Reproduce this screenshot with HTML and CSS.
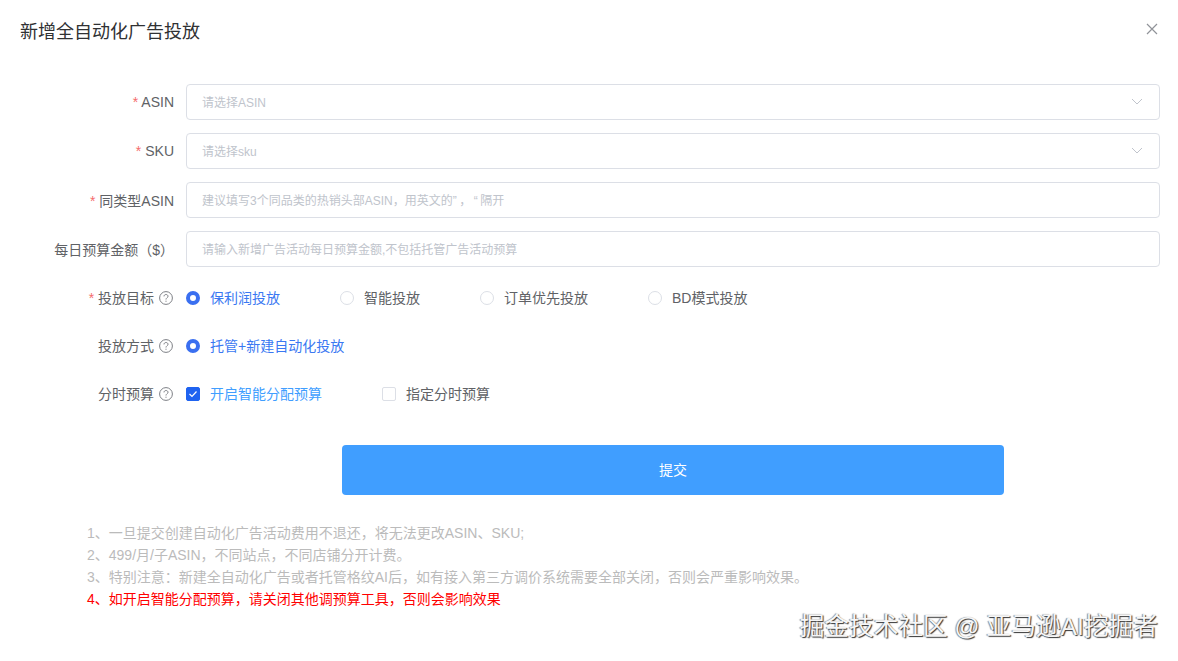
FILE: index.html
```html
<!DOCTYPE html>
<html lang="zh-CN">
<head>
  <meta charset="UTF-8" />
  <meta name="viewport" content="width=device-width, initial-scale=1.0"/>
  <title>新增全自动化广告投放</title>
  <link rel="stylesheet" href="styles.css">
</head>
<body>

  <div class="dialog">
    <div class="dialog-header">
      <span class="dialog-title">新增全自动化广告投放</span>
      <svg class="close-icon" width="12" height="12" viewBox="0 0 12 12"><path d="M1 1L11 11M11 1L1 11"/></svg>
    </div>

    <form class="form">
      <div class="form-row">
        <label class="form-label"><i class="req">*</i> ASIN</label>
        <div class="select">
          <span>请选择ASIN</span>
          <svg class="arrow" width="12" height="7" viewBox="0 0 12 7"><path d="M1 1L6 6L11 1"/></svg>
        </div>
      </div>
      <div class="form-row">
        <label class="form-label"><i class="req">*</i> SKU</label>
        <div class="select">
          <span>请选择sku</span>
          <svg class="arrow" width="12" height="7" viewBox="0 0 12 7"><path d="M1 1L6 6L11 1"/></svg>
        </div>
      </div>
      <div class="form-row">
        <label class="form-label"><i class="req">*</i> 同类型ASIN</label>
        <div class="select"><span>建议填写3个同品类的热销头部ASIN，用英文的<span class="quote">”，“</span>隔开</span></div>
      </div>
      <div class="form-row">
        <label class="form-label">每日预算金额（$）</label>
        <div class="select"><span>请输入新增广告活动每日预算金额,不包括托管广告活动预算</span></div>
      </div>

      <div class="form-row">
        <label class="form-label with-help"><i class="req">*</i> 投放目标<svg class="help" width="14" height="14" viewBox="0 0 14 14"><circle cx="7" cy="7" r="6.4"/><path d="M5 5.4C5 4.2 5.9 3.5 7 3.5C8.1 3.5 9 4.2 9 5.3C9 6.7 7 6.8 7 8.5"/><path d="M7 9.7V10.8"/></svg></label>
        <div class="options">
          <div class="option active"><span class="radio"></span><span class="option-text">保利润投放</span></div>
          <div class="option"><span class="radio"></span><span class="option-text">智能投放</span></div>
          <div class="option"><span class="radio"></span><span class="option-text">订单优先投放</span></div>
          <div class="option"><span class="radio"></span><span class="option-text">BD模式投放</span></div>
        </div>
      </div>
      <div class="form-row row-tight">
        <label class="form-label with-help">投放方式<svg class="help" width="14" height="14" viewBox="0 0 14 14"><circle cx="7" cy="7" r="6.4"/><path d="M5 5.4C5 4.2 5.9 3.5 7 3.5C8.1 3.5 9 4.2 9 5.3C9 6.7 7 6.8 7 8.5"/><path d="M7 9.7V10.8"/></svg></label>
        <div class="options">
          <div class="option active"><span class="radio"></span><span class="option-text">托管+新建自动化投放</span></div>
        </div>
      </div>
      <div class="form-row row-tight">
        <label class="form-label with-help">分时预算<svg class="help" width="14" height="14" viewBox="0 0 14 14"><circle cx="7" cy="7" r="6.4"/><path d="M5 5.4C5 4.2 5.9 3.5 7 3.5C8.1 3.5 9 4.2 9 5.3C9 6.7 7 6.8 7 8.5"/><path d="M7 9.7V10.8"/></svg></label>
        <div class="options">
          <div class="option checked">
            <span class="checkbox"><svg width="10" height="8" viewBox="0 0 10 8"><path d="M1.5 4L4 6.5L8.5 1.5"/></svg></span><span class="option-text">开启智能分配预算</span>
          </div>
          <div class="option"><span class="checkbox"></span><span class="option-text">指定分时预算</span></div>
        </div>
      </div>

      <div class="submit-row">
        <button type="button" class="submit">提交</button>
      </div>
    </form>

    <div class="notes">
      <p>1、一旦提交创建自动化广告活动费用不退还，将无法更改ASIN、SKU;</p>
      <p>2、499/月/子ASIN，不同站点，不同店铺分开计费。</p>
      <p>3、特别注意：新建全自动化广告或者托管格纹AI后，如有接入第三方调价系统需要全部关闭，否则会严重影响效果。</p>
      <p class="warn">4、如开启智能分配预算，请关闭其他调预算工具，否则会影响效果</p>
    </div>
  </div>

  <div class="watermark">掘金技术社区 @ 亚马逊AI挖掘者</div>

</body>
</html>
```

FILE: styles.css
```css
* {
  box-sizing: border-box;
}

html, body {
  height: 100%;
}

body {
  margin: 0;
  background: #fff;
  font-family: "Liberation Sans", "Noto Sans CJK SC", sans-serif;
  font-size: 14px;
  color: #606266;
  overflow: hidden;
}

.dialog {
  height: 100%;
}

.dialog-header {
  display: flex;
  align-items: center;
  justify-content: space-between;
  height: 60px;
  padding: 0 20px;
}

.dialog-title {
  font-size: 18px;
  color: #303133;
}

.close-icon {
  margin-top: -2px;
}

.close-icon path {
  fill: none;
  stroke: #909399;
  stroke-width: 1.2;
}

.form {
  padding: 24px 18px 0 0;
}

.form-row {
  display: flex;
  align-items: center;
  gap: 12px;
  height: 36px;
  margin-bottom: 13px;
}

.form-row.row-tight {
  margin-top: -1px;
}

.form-label {
  flex: none;
  width: 174px;
  padding-bottom: 1px;
  text-align: right;
  white-space: nowrap;
}

.form-label.with-help {
  padding-bottom: 2px;
}

.row-tight .form-label.with-help {
  padding-bottom: 3px;
}

.req {
  color: #f56c6c;
  font-style: normal;
}

.help {
  margin: 0 1px 0 5px;
  vertical-align: -2px;
}

.help circle,
.help path {
  fill: none;
  stroke: #7d7f85;
  stroke-width: 1;
}

.select {
  display: flex;
  align-items: center;
  justify-content: space-between;
  flex: 1;
  height: 36px;
  padding: 0 16px 2px 15px;
  border: 1px solid #dcdfe6;
  border-radius: 4px;
  font-size: 12px;
  color: #c0c4cc;
}

.quote {
  letter-spacing: 2.5px;
}

.arrow path {
  fill: none;
  stroke: #c0c4cc;
  stroke-width: 1;
}

.options {
  display: flex;
  gap: 60px;
}

.option {
  display: flex;
  align-items: center;
  gap: 10px;
}

.option-text {
  margin-bottom: 2px;
}

.option.active {
  color: #3a78f2;
}

.option.checked {
  color: #409eff;
}

.radio {
  width: 14px;
  height: 14px;
  border: 1px solid #dcdfe6;
  border-radius: 50%;
  background: #fff;
}

.active .radio {
  border: 4px solid #3a6ff0;
}

.checkbox {
  display: flex;
  align-items: center;
  justify-content: center;
  width: 14px;
  height: 14px;
  border: 1px solid #dcdfe6;
  border-radius: 2px;
}

.checked .checkbox {
  border-color: #1f63f0;
  background: #1f63f0;
}

.checkbox path {
  fill: none;
  stroke: #fff;
  stroke-width: 1.2;
}

.submit-row {
  padding: 20px 156px 0 342px;
}

.submit {
  display: block;
  width: 100%;
  height: 50px;
  padding-bottom: 3px;
  border: none;
  border-radius: 4px;
  background: #409eff;
  color: #fff;
  font: inherit;
}

.notes {
  padding: 27px 0 0 87px;
  color: #bbb;
  line-height: 22px;
}

.notes p {
  margin: 0;
}

.notes .warn {
  color: #f00;
}

.watermark {
  position: absolute;
  right: 20px;
  bottom: 17px;
  font-size: 24.7px;
  line-height: 34px;
  color: #f6f6f6;
  text-shadow: 1px 1px 1px #333, -1px 0 1px #888;
}
```
